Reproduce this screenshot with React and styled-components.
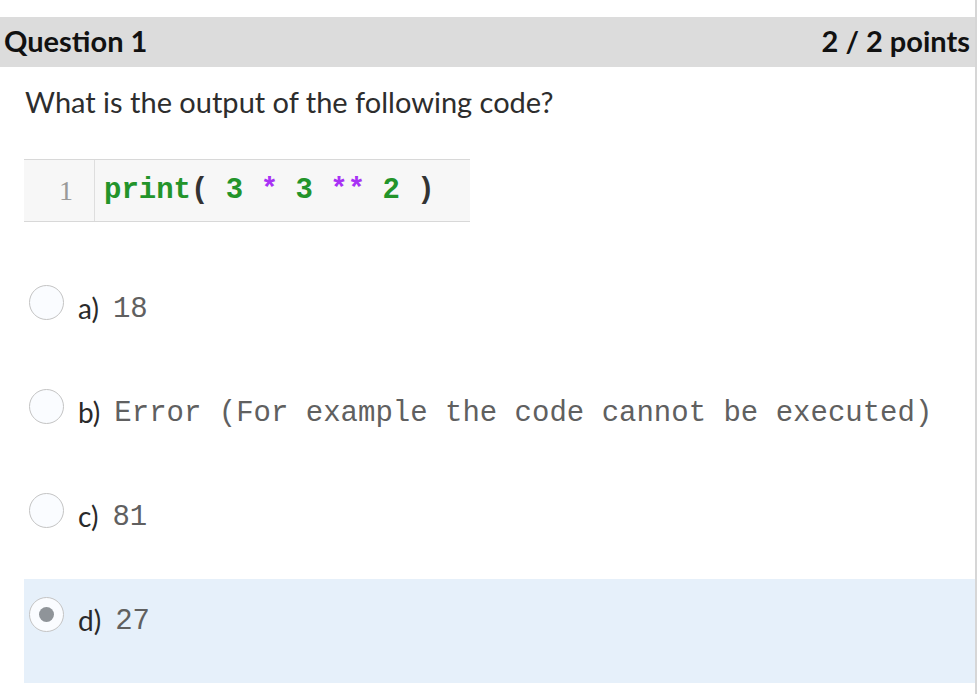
import React from "react";
import styled, { createGlobalStyle } from "styled-components";

const Global = createGlobalStyle`
  html, body { margin: 0; padding: 0; background: #ffffff; }
  body { font-family: Lato, "Open Sans", sans-serif; color: #222; }
`;

const Page = styled.div`
  width: 977px;
  min-height: 694px;
  box-sizing: border-box;
  padding-top: 17px;
  border-right: 2px solid #d6d6d6;
`;

const Header = styled.div`
  height: 50px;
  background: #dcdcdc;
  display: flex;
  align-items: center;
  justify-content: space-between;
  padding: 0 5px 3px 4px;
  box-sizing: border-box;
  font-size: 29px;
  font-weight: 700;
  color: #111;
`;

const Body = styled.div`
  padding-left: 24px;
`;

const Prompt = styled.p`
  margin: 18px 0 0 1px;
  font-size: 29px;
  line-height: 34px;
  color: #2d2d2d;
`;

const Code = styled.div`
  margin-top: 40px;
  width: 446px;
  height: 61px;
  display: flex;
  background: #f7f7f7;
  border-top: 1px solid #d8d8d8;
  border-bottom: 1px solid #d8d8d8;
  font-family: "Liberation Mono", "Courier New", monospace;
  font-size: 29px;
  font-weight: 700;
`;

const Gutter = styled.div`
  width: 71px;
  border-right: 1px solid #dedede;
  display: flex;
  align-items: center;
  justify-content: flex-end;
  padding-right: 21px;
  box-sizing: border-box;
  color: #9a9a9a;
  font-family: "Liberation Serif", serif;
  font-weight: 400;
  font-size: 28px;
`;

const Line = styled.div`
  padding-left: 9px;
  line-height: 61px;
  white-space: pre;
  color: #333;
`;

const Tok = styled.span`
  color: ${(p) => (p.$k === "g" ? "#23942a" : p.$k === "p" ? "#a832f5" : "#333")};
`;

const Options = styled.div`
  margin-top: 45px;
`;

const Option = styled.label`
  height: 104px;
  box-sizing: border-box;
  display: flex;
  align-items: flex-start;
  padding: 18px 0 0 5px;
  background: ${(p) => (p.$selected ? "#e6f0fa" : "transparent")};
`;

const Radio = styled.span`
  width: 35px;
  height: 35px;
  box-sizing: border-box;
  border-radius: 50%;
  border: 1px solid #c4c4c4;
  background: #fafcff;
  display: flex;
  align-items: center;
  justify-content: center;
  flex-shrink: 0;
  &::after {
    content: "";
    width: 15px;
    height: 15px;
    border-radius: 50%;
    background: ${(p) => (p.$checked ? "#8f9499" : "transparent")};
  }
`;

const Letter = styled.span`
  margin-left: 14px;
  margin-top: 6px;
  font-size: 28px;
  line-height: 34px;
  color: #2a2a2a;
`;

const Value = styled.span`
  margin-left: 14px;
  margin-top: 8px;
  font-family: "Liberation Mono", "Courier New", monospace;
  font-size: 29px;
  line-height: 34px;
  color: #606060;
  white-space: pre;
`;

const options = [
  { l: "a)", v: "18" },
  { l: "b)", v: "Error (For example the code cannot be executed)" },
  { l: "c)", v: "81" },
  { l: "d)", v: "27", sel: true },
];

export default function App() {
  return (
    <>
      <Global />
      <Page>
        <Header>
          <span>Question 1</span>
          <span>2 / 2 points</span>
        </Header>
        <Body>
          <Prompt>What is the output of the following code?</Prompt>
          <Code>
            <Gutter>1</Gutter>
            <Line>
              <Tok $k="g">print</Tok>
              {"( "}
              <Tok $k="g">3</Tok>
              {" "}
              <Tok $k="p">*</Tok>
              {" "}
              <Tok $k="g">3</Tok>
              {" "}
              <Tok $k="p">**</Tok>
              {" "}
              <Tok $k="g">2</Tok>
              {" )"}
            </Line>
          </Code>
          <Options>
            {options.map((o) => (
              <Option key={o.l} $selected={o.sel}>
                <Radio $checked={o.sel} />
                <Letter>{o.l}</Letter>
                <Value>{o.v}</Value>
              </Option>
            ))}
          </Options>
        </Body>
      </Page>
    </>
  );
}
